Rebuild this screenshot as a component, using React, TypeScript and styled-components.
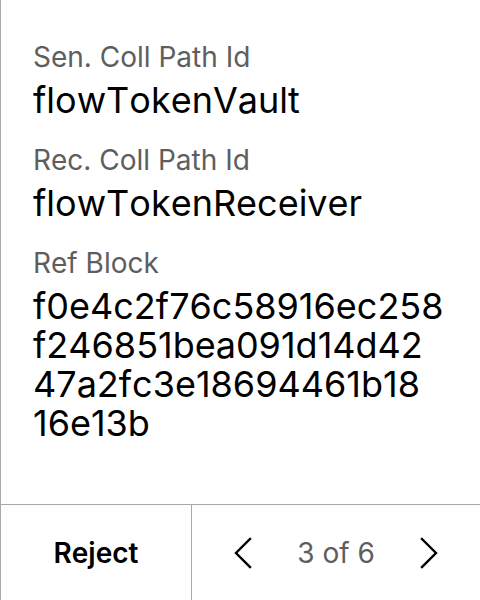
import React from "react";
import styled, { createGlobalStyle } from "styled-components";

const Global = createGlobalStyle`
  html, body { margin: 0; padding: 0; background: #fff; }
  body {
    font-family: Inter, "Noto Sans", sans-serif;
    font-kerning: none;
  }
`;

const Panel = styled.div`
  width: 480px;
  height: 600px;
  box-sizing: border-box;
  border-left: 1px solid #a8a8a8;
  display: flex;
  flex-direction: column;
  background: #fff;
`;

const Content = styled.div`
  flex: 1;
  padding: 41px 24px 0 32px;
  display: flex;
  flex-direction: column;
  gap: 24px;
`;

const Field = styled.div`
  display: flex;
  flex-direction: column;
  gap: 8px;
`;

const Label = styled.div`
  font-size: 28px;
  line-height: 32px;
  color: #5e5e5e;
  white-space: nowrap;
`;

const Value = styled.div`
  font-size: 36px;
  line-height: 39px;
  color: #000;
  word-break: break-all;
`;

const HashLine = styled.span`
  display: block;
  white-space: nowrap;
`;

const Footer = styled.div`
  height: 96px;
  border-top: 1px solid #a8a8a8;
  display: grid;
  grid-template-columns: 191px 1fr;
  box-sizing: border-box;
`;

const RejectCell = styled.button`
  border: 0;
  border-right: 1px solid #a8a8a8;
  background: transparent;
  font-family: inherit;
  font-kerning: none;
  font-size: 28px;
  font-weight: 600;
  color: #000;
  padding: 0;
`;

const Pager = styled.div`
  display: flex;
  align-items: center;
  justify-content: center;
`;

const Arrow = styled.button`
  border: 0;
  background: transparent;
  padding: 0;
  width: 40px;
  height: 40px;
  display: flex;
  align-items: center;
  justify-content: center;
`;

const Count = styled.span`
  font-size: 28px;
  color: #5e5e5e;
  width: 146px;
  text-align: center;
`;

const Chevron = ({ dir }: { dir: "left" | "right" }) => (
  <svg width="18" height="32" viewBox="0 0 18 32" fill="none">
    <path
      d={dir === "left" ? "M16 2 L2 16 L16 30" : "M2 2 L16 16 L2 30"}
      stroke="#000"
      strokeWidth="2.4"
      strokeLinecap="square"
      strokeLinejoin="miter"
    />
  </svg>
);

const refBlockLines = [
  "f0e4c2f76c58916ec258",
  "f246851bea091d14d42",
  "47a2fc3e18694461b18",
  "16e13b",
];

export default function App() {
  return (
    <>
      <Global />
      <Panel>
        <Content>
          <Field>
            <Label>Sen. Coll Path Id</Label>
            <Value>flowTokenVault</Value>
          </Field>
          <Field>
            <Label>Rec. Coll Path Id</Label>
            <Value>flowTokenReceiver</Value>
          </Field>
          <Field>
            <Label>Ref Block</Label>
            <Value>
              {refBlockLines.map((l) => (
                <HashLine key={l}>{l}</HashLine>
              ))}
            </Value>
          </Field>
        </Content>
        <Footer>
          <RejectCell>Reject</RejectCell>
          <Pager>
            <Arrow><Chevron dir="left" /></Arrow>
            <Count>3 of 6</Count>
            <Arrow><Chevron dir="right" /></Arrow>
          </Pager>
        </Footer>
      </Panel>
    </>
  );
}
